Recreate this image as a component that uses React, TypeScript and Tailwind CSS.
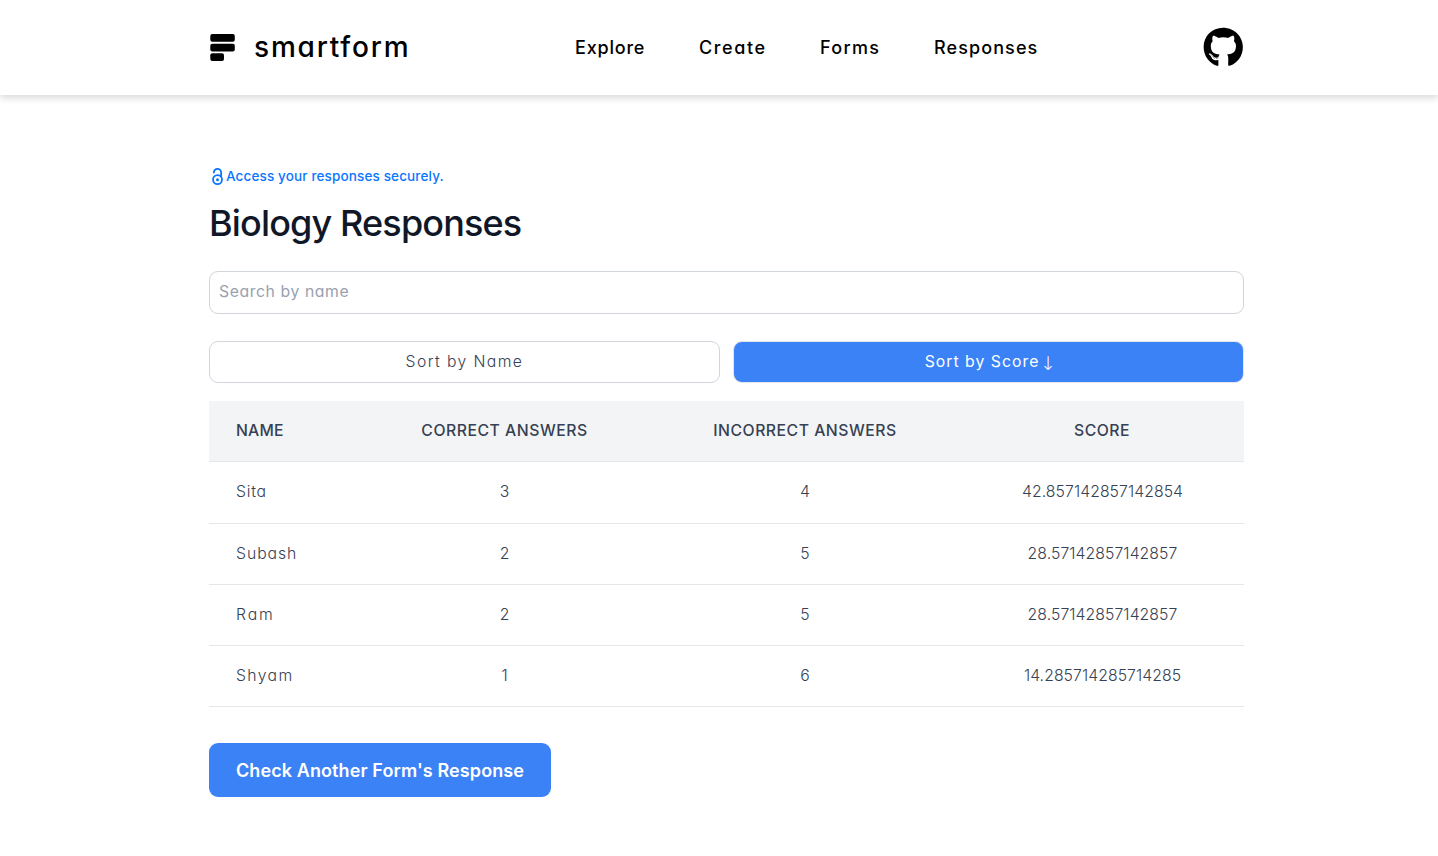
import { SiOpenaccess } from "react-icons/si";
import { FaGithub } from "react-icons/fa";

const links = [
  { label: "Explore", style: "w-[124px] tracking-[0.8px]" },
  { label: "Create", style: "w-[121px] tracking-[1.6px]" },
  { label: "Forms", style: "w-[114px] tracking-[1.3px]" },
  { label: "Responses", style: "tracking-[1.1px]" },
];

const rows = [
  { name: "Sita", style: "tracking-[0.8px]", height: "h-[62px]", correct: 3, incorrect: 4, score: "42.857142857142854" },
  { name: "Subash", style: "tracking-[0.95px]", height: "h-[61px]", correct: 2, incorrect: 5, score: "28.57142857142857" },
  { name: "Ram", style: "tracking-[1.9px]", height: "h-[61px]", correct: 2, incorrect: 5, score: "28.57142857142857" },
  { name: "Shyam", style: "tracking-[1.4px]", height: "h-[61px]", correct: 1, incorrect: 6, score: "14.285714285714285" },
];

function Logo() {
  return (
    <svg width="25" height="27" viewBox="0 0 25 27" className="fill-black">
      <rect x="0.3" y="0" width="24.5" height="7.7" rx="2" />
      <rect x="0.3" y="9.7" width="24.5" height="7.7" rx="2" />
      <rect x="0.3" y="19.3" width="13.7" height="7.7" rx="2" />
    </svg>
  );
}

export default function App() {
  return (
    <div className="min-h-[856px] bg-white font-['Inter',sans-serif] text-[15.75px] [font-feature-settings:'cv11']">
      <header className="h-[95px] bg-white shadow-[0_3px_7px_rgba(0,0,0,0.15)]">
        <div className="ml-[209px] flex h-full w-[1035px] items-center">
          <a className="flex w-[366px] items-center gap-[19px] pl-px text-[28px] font-medium tracking-[1.8px]">
            <Logo />
            <span className="pb-0.5">smartform</span>
          </a>
          <nav className="flex flex-1 text-[18px] font-medium">
            {links.map((l) => (
              <a key={l.label} className={l.style}>
                {l.label}
              </a>
            ))}
          </nav>
          <FaGithub className="mr-px mb-px size-[40.5px]" />
        </div>
      </header>
      <main className="ml-[209px] w-[1035px] pt-[72px]">
        <p className="flex h-[18px] items-center text-[13.5px] font-medium tracking-[0.14px] text-[#0a76ff]">
          <SiOpenaccess className="size-[17px]" />
          <span>Access your responses securely.</span>
        </p>
        <h1 className="mt-[18px] h-10 text-[36px] leading-10 font-medium tracking-[-0.85px] text-gray-900">
          Biology Responses
        </h1>
        <input
          placeholder="Search by name"
          className="mt-[28px] block h-[43px] w-full rounded-[9px] border border-gray-300 px-[9px] pb-0.5 tracking-[0.6px] placeholder:text-gray-400"
        />
        <div className="mt-[27px] grid h-[42px] grid-cols-2 gap-[13px]">
          <button className="rounded-[9px] border border-gray-300 font-light tracking-[1.4px] text-gray-700">
            Sort by Name
          </button>
          <button className="flex items-center justify-center gap-1 rounded-[9px] border border-gray-200 bg-[#3b82f6] tracking-[1.03px] text-white">
            Sort by Score
            <span className="w-[9px] pt-[3px] text-[19px] leading-none font-extralight tracking-normal font-['DejaVu_Sans',sans-serif]">
              <span className="-ml-[3px]">↓</span>
            </span>
          </button>
        </div>
        <table className="mt-[18px] w-full table-fixed text-center">
          <colgroup>
            <col className="w-[149px]" />
            <col className="w-[293px]" />
            <col className="w-[308px]" />
            <col />
          </colgroup>
          <thead>
            <tr className="h-[60px] border-b border-gray-200 bg-gray-100 tracking-[0.52px] text-gray-700">
              <th className="pl-[27px] text-left font-medium tracking-[0.2px]">NAME</th>
              <th className="font-medium">CORRECT ANSWERS</th>
              <th className="font-medium">INCORRECT ANSWERS</th>
              <th className="pl-px font-medium">SCORE</th>
            </tr>
          </thead>
          <tbody className="font-light text-gray-700">
            {rows.map((r) => (
              <tr key={r.name} className={`border-b border-gray-200 ${r.height}`}>
                <td className={`pl-[27px] text-left ${r.style}`}>{r.name}</td>
                <td>{r.correct}</td>
                <td>{r.incorrect}</td>
                <td className="pl-0.5 tracking-[0.08px]">{r.score}</td>
              </tr>
            ))}
          </tbody>
        </table>
        <button className="mt-9 h-[54px] w-[342px] rounded-[9px] bg-[#3b82f6] pt-0.5 text-[18px] font-semibold tracking-[0.1px] text-white">
          Check Another Form's Response
        </button>
      </main>
    </div>
  );
}
